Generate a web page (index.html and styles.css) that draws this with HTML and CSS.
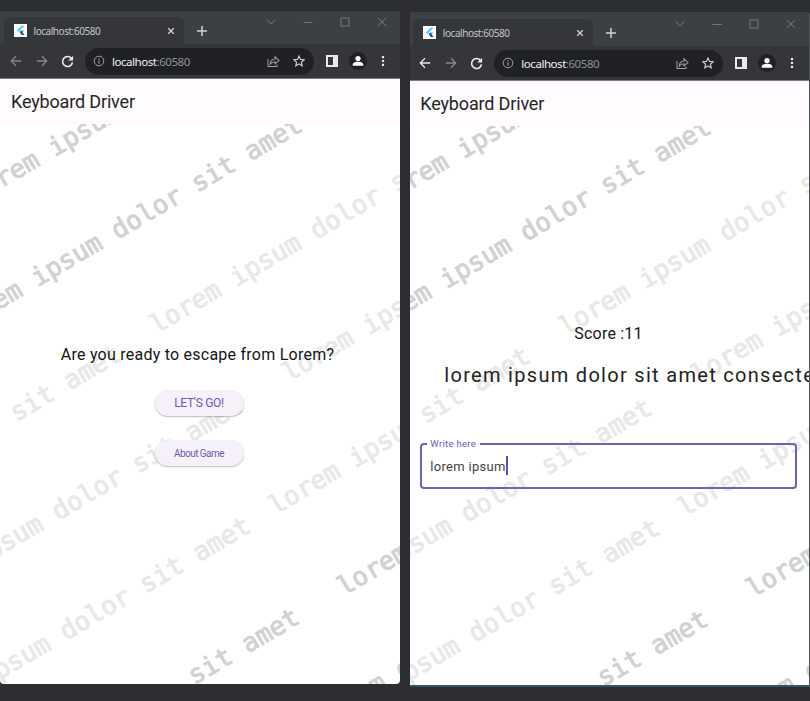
FILE: index.html
```html
<!DOCTYPE html>
<html lang="en">
<head>
<meta charset="utf-8">
<title>Keyboard Driver</title>
<link rel="stylesheet" href="styles.css">
</head>
<body>
<svg class="defs" width="0" height="0" aria-hidden="true">
  <symbol id="flutter" viewBox="0 0 13 13"><rect width="13" height="13" fill="#fff"/><path d="M7.6 1.7h3L4.4 7.9 2.9 6.4z" fill="#54c5f8"/><path d="M7.6 6.4h3L7.3 9.6 5.7 8.1z" fill="#45aef0"/><path d="M5.7 8.1l1.6-1.5 3.3 4.5h-3z" fill="#17589c"/></symbol>
  <symbol id="close" viewBox="0 0 8 8"><path d="M1.2 1.2l5.6 5.6M6.8 1.2L1.2 6.8" fill="none" stroke="currentColor" stroke-width="1.3"/></symbol>
  <symbol id="plus" viewBox="0 0 12 12"><path d="M6 1v10M1 6h10" fill="none" stroke="currentColor" stroke-width="1.5"/></symbol>
  <symbol id="chevron" viewBox="0 0 10 10"><path d="M.8 2.8L5 7l4.200-4.200" fill="none" stroke="currentColor" stroke-width="1"/></symbol>
  <symbol id="min" viewBox="0 0 10 10"><path d="M.5 5.500h9" stroke="currentColor" stroke-width="1"/></symbol>
  <symbol id="max" viewBox="0 0 10 10"><rect x="1" y="1" width="8" height="8" fill="none" stroke="currentColor"/></symbol>
  <symbol id="exit" viewBox="0 0 10 10"><path d="M1 1l8 8M9 1L1 9" stroke="currentColor"/></symbol>
  <symbol id="back" viewBox="0 0 12 12"><path d="M11.200 6H1.500M6 1.300L1.300 6 6 10.700" fill="none" stroke="currentColor" stroke-width="1.300"/></symbol>
  <symbol id="forward" viewBox="0 0 12 12"><path d="M.8 6h9.700M6 1.300L10.700 6 6 10.700" fill="none" stroke="currentColor" stroke-width="1.300"/></symbol>
  <symbol id="reload" viewBox="0 0 12 12"><path d="M9.700 3.200A4.600 4.600 0 1 0 10.600 6.800" fill="none" stroke="currentColor" stroke-width="1.500"/><path d="M11.200.6v4.500H6.700z" fill="currentColor"/></symbol>
  <symbol id="info" viewBox="0 0 12 12"><circle cx="6" cy="6" r="4.800" fill="none" stroke="currentColor"/><path d="M6 5.300v3.400M6 3.300v1.200" stroke="currentColor" stroke-width="1.100"/></symbol>
  <symbol id="share" viewBox="0 0 13 13"><path d="M1 4v7.500h9V9.500M3.200 9.300C3.400 6 5.200 4.200 8 4.100V1.800l4 3.600-4 3.500V6.700C6 6.700 4.500 7.500 3.200 9.300z" fill="none" stroke="currentColor" stroke-width="1.050"/></symbol>
  <symbol id="star" viewBox="0 0 12 12"><path d="M6 1l1.500 3.400 3.700.3-2.800 2.500.8 3.600L6 8.900l-3.200 1.900.8-3.600L.8 4.700l3.700-.3z" fill="none" stroke="currentColor" stroke-width="1.200"/></symbol>
  <symbol id="panel" viewBox="0 0 12 12"><path d="M0 0h12v12H0zM2 2v8h5V2z" fill="currentColor" fill-rule="evenodd"/></symbol>
  <symbol id="user" viewBox="0 0 18 18"><circle cx="9" cy="9" r="9" fill="#202124"/><circle cx="9" cy="6.600" r="2.600" fill="#fff"/><path d="M3.700 13.800v-1.300c0-2 3.300-2.700 5.300-2.700s5.300.7 5.300 2.700v1.300z" fill="#fff"/></symbol>
  <symbol id="dots" viewBox="0 0 4 12"><path d="M.9 1h2.200v2.200H.9zM.9 4.900h2.200v2.200H.9zM.9 8.800h2.200V11H.9z" fill="currentColor"/></symbol>
  <symbol id="watermark" viewBox="0 0 400 560">
    <g class="wm-dark">
      <text transform="translate(-25.300 80) rotate(-30.500)">lorem ipsum</text>
      <text transform="translate(-42.300 210) rotate(-30.500)">lorem ipsum dolor sit amet</text>
      <text transform="translate(194.500 561) rotate(-30.500)">sit amet</text>
      <text transform="translate(344 472) rotate(-30.500)">lorem</text>
      <text transform="translate(321.500 602.500) rotate(-30.500)">ipsum dolor</text>
    </g>
    <g class="wm-light">
      <text transform="translate(156.500 210) rotate(-30.500)">lorem ipsum dolor sit</text>
      <text transform="translate(289 258) rotate(-30.500)">lorem ipsum</text>
      <text transform="translate(16.500 298) rotate(-30.500)">sit amet</text>
      <text transform="translate(-101.600 491) rotate(-30.500)">lorem ipsum dolor sit amet</text>
      <text transform="translate(-94 611) rotate(-30.500)">lorem ipsum dolor sit amet</text>
      <text transform="translate(275.500 391) rotate(-30.500)">lorem ipsum</text>
    </g>
  </symbol>
</svg>

<main class="desktop">
  <section class="window window-start">
    <div class="inner">
      <header class="tabstrip">
        <div class="tab"><svg class="i13"><use href="#flutter"/></svg><span class="tab-title">localhost:60580</span><svg class="i8"><use href="#close"/></svg></div>
        <svg class="i12 plus"><use href="#plus"/></svg>
        <div class="controls"><svg class="i10"><use href="#chevron"/></svg><svg class="i10"><use href="#min"/></svg><svg class="i10"><use href="#max"/></svg><svg class="i10"><use href="#exit"/></svg></div>
      </header>
      <nav class="toolbar">
        <svg class="i12 back"><use href="#back"/></svg><svg class="i12 forward"><use href="#forward"/></svg><svg class="i13 reload"><use href="#reload"/></svg>
        <div class="omnibox"><svg class="i12 info"><use href="#info"/></svg><span class="url">localhost<span class="port">:60580</span></span><svg class="i13 share"><use href="#share"/></svg><svg class="i12"><use href="#star"/></svg></div>
        <svg class="i12 panel"><use href="#panel"/></svg><svg class="i18 user"><use href="#user"/></svg><svg class="dots"><use href="#dots"/></svg>
      </nav>
      <h1 class="appbar">Keyboard Driver</h1>
      <div class="page start">
        <svg class="wm"><use href="#watermark" width="400" height="560"/></svg>
        <p class="question">Are you ready to escape from Lorem?</p>
        <button class="btn go">LET'S GO!</button>
        <button class="btn about">About Game</button>
      </div>
    </div>
  </section>

  <section class="window window-game">
    <div class="inner">
      <header class="tabstrip">
        <div class="tab"><svg class="i13"><use href="#flutter"/></svg><span class="tab-title">localhost:60580</span><svg class="i8"><use href="#close"/></svg></div>
        <svg class="i12 plus"><use href="#plus"/></svg>
        <div class="controls"><svg class="i10"><use href="#chevron"/></svg><svg class="i10"><use href="#min"/></svg><svg class="i10"><use href="#max"/></svg><svg class="i10"><use href="#exit"/></svg></div>
      </header>
      <nav class="toolbar">
        <svg class="i12 back enabled"><use href="#back"/></svg><svg class="i12 forward"><use href="#forward"/></svg><svg class="i13 reload"><use href="#reload"/></svg>
        <div class="omnibox"><svg class="i12 info"><use href="#info"/></svg><span class="url">localhost<span class="port">:60580</span></span><svg class="i13 share"><use href="#share"/></svg><svg class="i12"><use href="#star"/></svg></div>
        <svg class="i12 panel"><use href="#panel"/></svg><svg class="i18 user"><use href="#user"/></svg><svg class="dots"><use href="#dots"/></svg>
      </nav>
      <h1 class="appbar">Keyboard Driver</h1>
      <div class="page game">
        <svg class="wm"><use href="#watermark" width="400" height="560"/></svg>
        <p class="score">Score :11</p>
        <p class="prompt">lorem ipsum dolor sit amet consectetur</p>
        <fieldset class="field">
          <legend>Write here</legend>
          <div class="value">lorem ipsum<span class="caret"></span></div>
        </fieldset>
      </div>
    </div>
  </section>
</main>
</body>
</html>
```
FILE: styles.css
```css
* { box-sizing: border-box; }
body { margin: 0; width: 810px; height: 701px; overflow: hidden; background: #2d2e32; font-family: Roboto, sans-serif; }
svg { flex: none; display: block; }
.defs { position: absolute; }
.desktop { display: flex; gap: 10px; height: 701px; }
.window { overflow: hidden; }
.window-start { width: 400px; height: 673px; margin-top: 11px; border-radius: 0 2px 4px 4px; }
.window-game { width: 400px; height: 675px; margin-top: 12px; border-bottom: 2px solid #355465; border-right: 1px solid #50555a; border-radius: 0 3px 0 0; }
.inner { width: 400px; }
.window-game .inner { margin-left: -.7px; }
.window-game .tabstrip { height: 34px; padding-top: 7px; }

.i8 { width: 8px; height: 8px; }
.i10 { width: 10px; height: 10px; }
.i12 { width: 12px; height: 12px; }
.i13 { width: 13px; height: 13px; }
.i18 { width: 18px; height: 18px; }

.tabstrip { display: flex; height: 33px; padding: 6px 13px 0 4px; background: #3c4043; color: #d0d2d5; }
.tab { display: flex; align-items: center; width: 180px; height: 27px; padding: 0 9px 0 10px; border-radius: 6px 6px 0 0; background: #35363a; }
.tab-title { flex: 1; margin-left: 6.500px; font: 10px "Noto Sans", sans-serif; letter-spacing: -.45px; color: #c3c5c8; }
.plus { margin: 8px 0 0 12px; }
.controls { display: flex; gap: 27px; margin: 0 0 0 auto; color: #74787b; }

.toolbar { display: flex; align-items: center; height: 35px; padding: 0 0 0 10px; background: #35363a; border-bottom: 1px solid #77797c; color: #e8eaed; }
.back, .forward { color: #85878a; }
.back.enabled { color: #e8eaed; }
.forward { margin-left: 14px; }
.reload { margin-left: 13px; }
.omnibox { display: flex; align-items: center; width: 229px; height: 27px; margin-left: 11px; padding: 0 9px 0 8px; border-radius: 14px; background: #202124; color: #c4c6c9; }
.info { color: #9aa0a6; }
.url { flex: 1; margin-left: 7px; font: 11.500px "Noto Sans", sans-serif; letter-spacing: -.45px; color: #f1f3f4; }
.port { color: #8d9195; }
.share { margin-right: 13px; color: #9b9ea2; }
.panel { margin-left: 11.500px; }
.user { margin-left: 11px; }
.dots { width: 4px; height: 12px; margin-left: 14px; }

.appbar { height: 45px; margin: 0; padding-left: 11px; background: #fffbff; color: #252329; font-size: 18px; font-weight: 400; line-height: 46px; letter-spacing: -.16px; }
.window-game .appbar { line-height: 45px; }
.page { position: relative; display: flex; flex-direction: column; align-items: center; height: 560px; overflow: hidden; background: #fff; }
.page > * { position: relative; }
.page .wm { position: absolute; top: 0; left: 0; width: 400px; height: 560px; }
.wm-dark, .wm-light { font: 25.700px "DejaVu Sans Mono", monospace; stroke-width: .9px; }
.wm-dark { fill: #d1d1d1; stroke: #d1d1d1; }
.wm-light { fill: #e8e8e8; stroke: #e8e8e8; }

.question { margin: 220px 5px 0 0; color: #151515; font-size: 16px; line-height: 22px; letter-spacing: .24px; white-space: nowrap; }
.btn { width: 89px; height: 26px; margin-right: 2px; padding: 0; border: 0; border-radius: 13px; background: #f6f1f9; color: #6f58ae; box-shadow: 0 1px 1.500px #0004; font: 12px Roboto, sans-serif; }
.go { margin-top: 24px; letter-spacing: -.3px; }
.about { margin-top: 24px; font-size: 10px; letter-spacing: -.55px; }

.score { margin: 197px 0 0 -4px; color: #151515; font-size: 16px; line-height: 22px; letter-spacing: .2px; align-self: flex-start; padding-left: 169px; }
.prompt { align-self: flex-start; margin: 18px 0 0 35px; color: #222; font-size: 20px; letter-spacing: 1.300px; line-height: 24px; white-space: nowrap; }
.field { align-self: flex-start; width: 377px; height: 51px; margin: 51px 0 0 11px; padding: 0 0 0 8px; border: 2px solid #7460b1; border-radius: 4px; color: #444; }
.field legend { margin-left: -3px; padding: 0 4px 0 3px; color: #6f58ae; font-size: 9.500px; line-height: 12px; letter-spacing: .3px; }
.value { display: flex; align-items: center; height: 20px; margin-top: 6px; font-size: 13px; letter-spacing: .3px; }
.caret { width: 2px; height: 19px; margin-top: -2px; background: #6750a4; }
```
